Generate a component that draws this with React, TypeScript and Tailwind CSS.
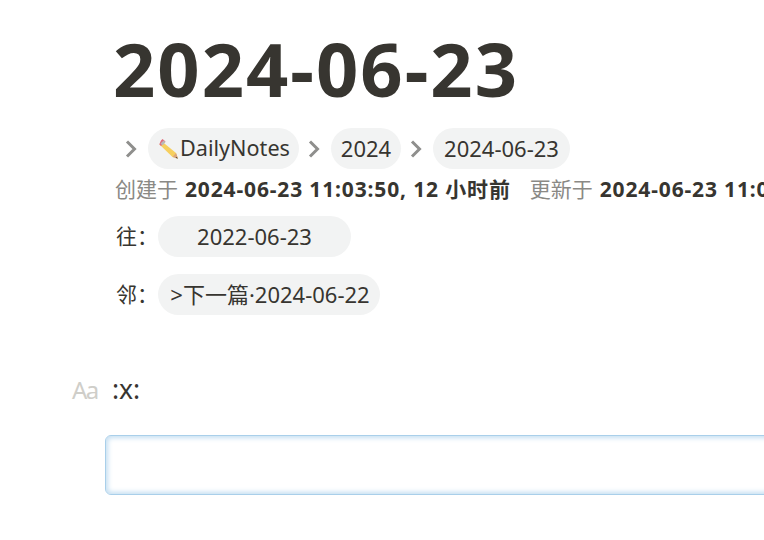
import React from 'react';

const FONT = "font-['Noto_Sans','Noto_Sans_CJK_SC',sans-serif]";

const Chevron = () => (
  <svg width="14" height="18" viewBox="0 0 14 18" fill="none" className="shrink-0">
    <path d="M3 1.5l7.5 7.5L3 16.5" stroke="#8f8f8d" strokeWidth="3" />
  </svg>
);

const Pencil = () => (
  <svg width="23" height="23" viewBox="0 0 23 23" className="shrink-0">
    <path d="M5 4.5L19 16l2 5.5-5.5-1.5L2.5 7.5z" fill="#f6cf5f" />
    <path d="M2.3 7.3L4 3.5l1.5-1.5 3 2.5-4.5 4.5z" fill="#e0697a" />
    <path d="M3.5 6.5l3-3 2 1.5-3 3.5z" fill="#b9b9b9" />
    <path d="M15.5 20l3.5-4 2 5.5z" fill="#dca67c" />
    <path d="M19.5 20l1.5 1.5-2.5-.5z" fill="#333" />
  </svg>
);

const Pill = ({ children, className = '' }: { children: React.ReactNode; className?: string }) => (
  <span className={`inline-flex h-[41px] items-center justify-center rounded-full bg-[#f2f3f3] text-[22px] text-[#373530] ${className}`}>
    {children}
  </span>
);

export default function App() {
  return (
    <div className={`h-[540px] w-[764px] overflow-hidden bg-white ${FONT}`}>
      <div className="w-[1000px] pl-[113px]">
        <h1 className="h-[128px] pt-[20px] text-[74px] leading-[98px] font-bold tracking-[2px] whitespace-nowrap text-[#373530]">2024-06-23</h1>

        {/* Breadcrumb */}
        <div className="flex h-[41px] items-center">
          <span className="ml-[11px] flex w-[24px]"><Chevron /></span>
          <Pill className="w-[151px]"><Pencil /><span className="text-[21.6px]">DailyNotes</span></Pill>
          <span className="ml-[8px] flex w-[24px]"><Chevron /></span>
          <Pill className="w-[70px]">2024</Pill>
          <span className="ml-[8px] flex w-[24px]"><Chevron /></span>
          <Pill className="w-[137px]">2024-06-23</Pill>
        </div>

        {/* Meta */}
        <div className="mt-[5px] flex h-[32px] items-center pl-[2px] text-[21px] whitespace-nowrap text-[#8a8985]">
          <span>创建于</span>
          <b className="ml-[7px] font-bold tracking-[0.85px] text-[#373530]">2024-06-23 11:03:50, 12 小时前</b>
          <span className="ml-[19px]">更新于</span>
          <b className="ml-[7px] font-bold tracking-[0.85px] text-[#373530]">2024-06-23 11:03:50</b>
        </div>

        <div className="mt-[10px] flex h-[41px] items-center pl-[3px] text-[21px] text-[#373530]">
          <span className="w-[42px]">往：</span>
          <Pill className="w-[193px]">2022-06-23</Pill>
        </div>
        <div className="mt-[17px] flex h-[41px] items-center pl-[3px] text-[21px] text-[#373530]">
          <span className="w-[42px]">邻：</span>
          <Pill className="w-[222px] pl-[2px]">&gt;下一篇·2024-06-22</Pill>
        </div>
      </div>

      {/* Field */}
      <div className="mt-[55px] flex h-[40px] items-center pl-[72px]">
        <span className="w-[40px] text-[24px] tracking-[-1.5px] text-[#cfcec9]">Aa</span>
        <span className="text-[26.5px] text-[#373530]">:x:</span>
      </div>
      <div className="mt-[25px] ml-[105px] h-[60px] w-[800px] rounded-[6px] border border-[#a9cfea] bg-white shadow-[inset_0_0_5px_2px_#c5dff2]" />
    </div>
  );
}
